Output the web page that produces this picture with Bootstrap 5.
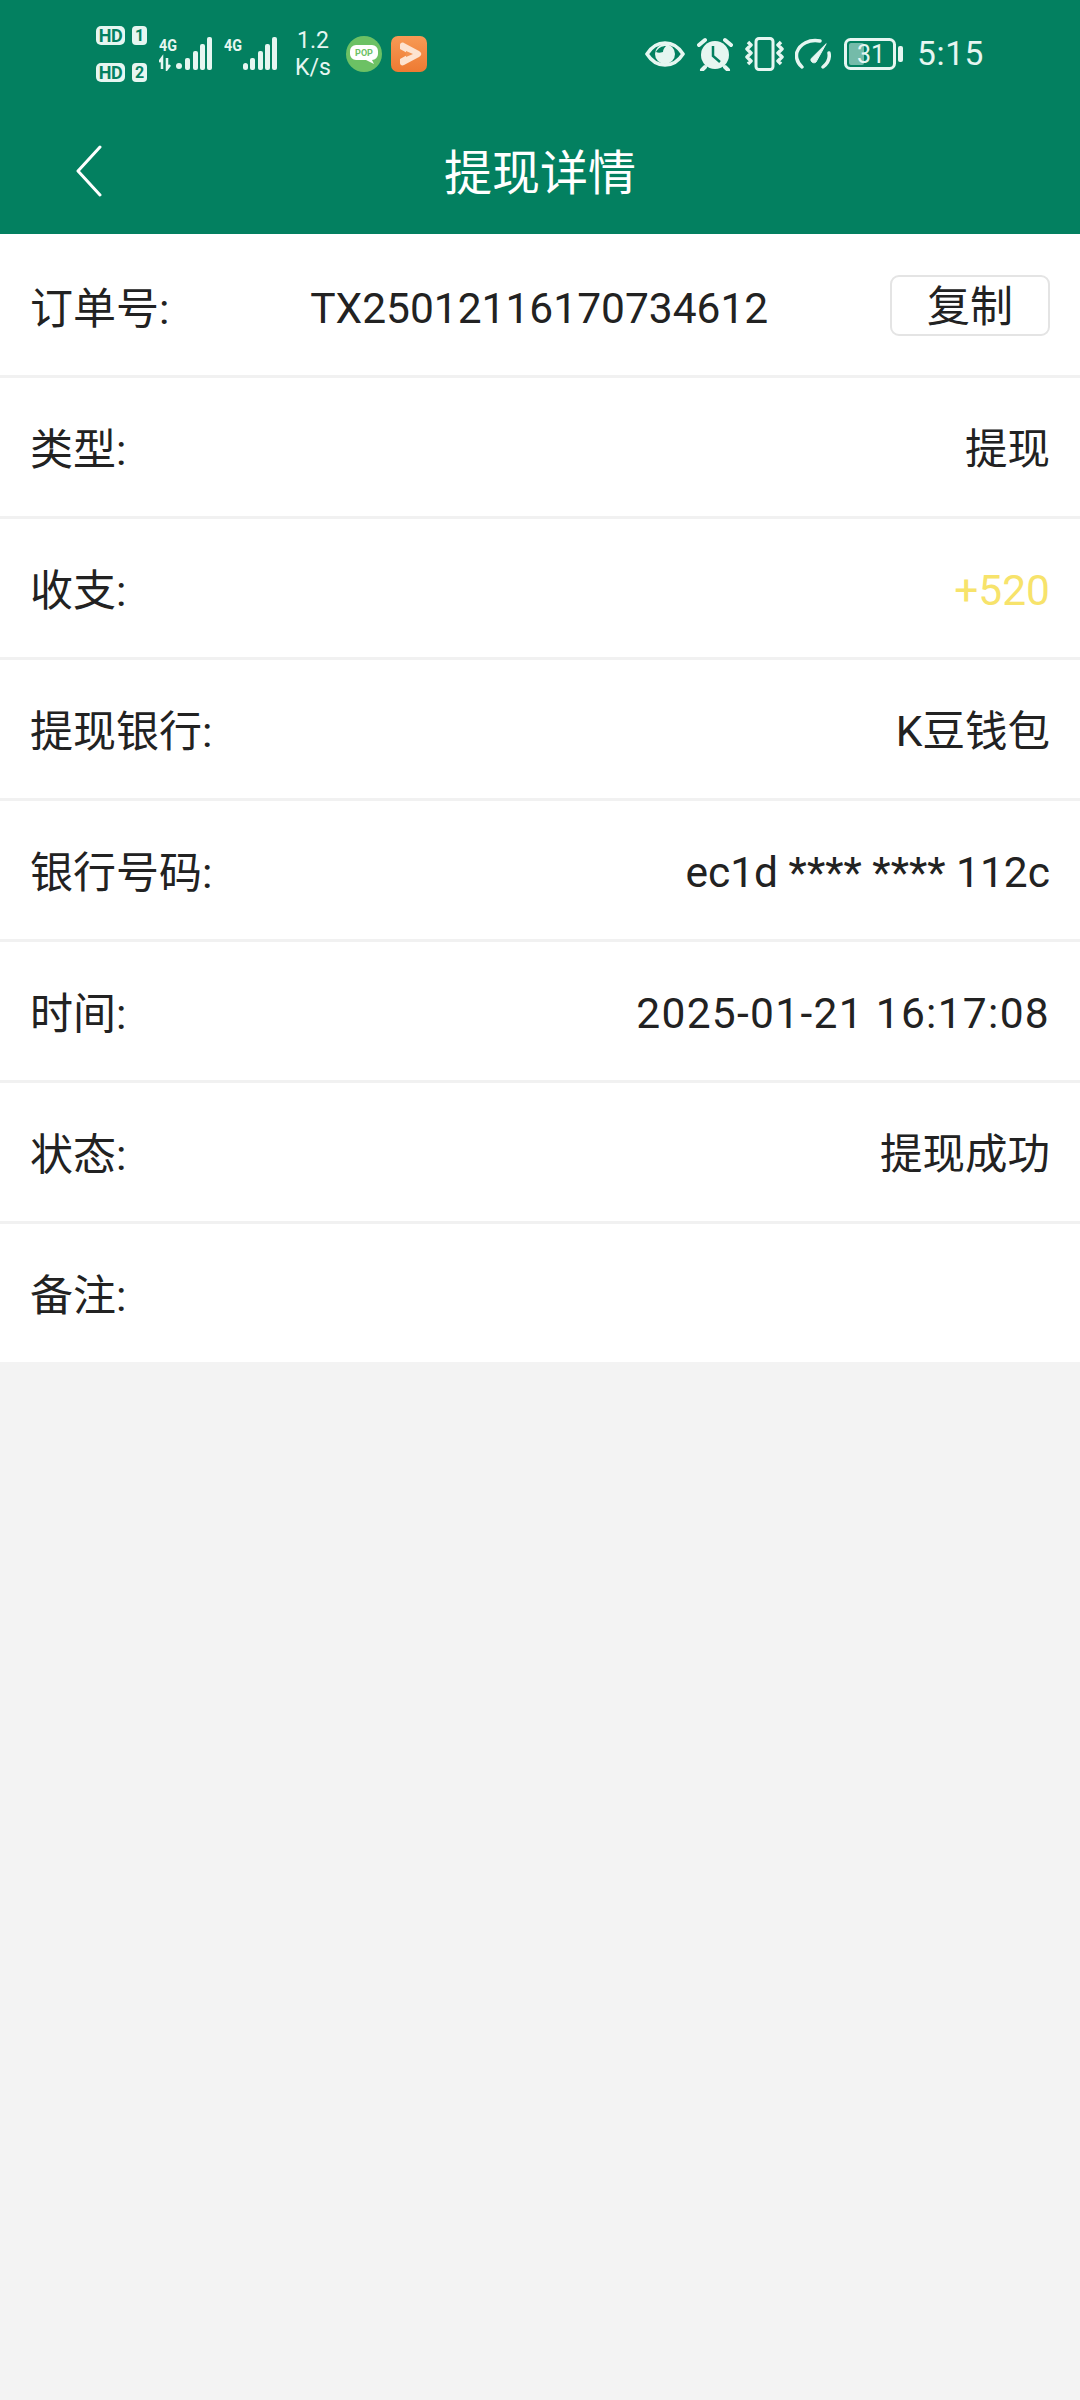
<!DOCTYPE html>
<html lang="zh-CN">
<head>
    <meta charset="UTF-8">
    <meta name="viewport" content="width=device-width, initial-scale=1">
    <title>提现详情</title>
    <link href="https://cdn.jsdelivr.net/npm/bootstrap@5.3.0/dist/css/bootstrap.min.css" rel="stylesheet">
    <style>
        body {
            background: #f3f3f3;
            font-family: "Noto Sans CJK SC", "Roboto", sans-serif;
            color: #222;
            min-height: 2400px;
        }
        .app-head { background: #038060; height: 234px; color: #fff; }
        .status-line { height: 108px; color: #e6f6f1; }
        .left-part { padding-left: 96px; }
        .right-part { padding-right: 96px; }
        .hd-col { display: flex; flex-direction: column; gap: 18px; margin-right: 12px; }
        .hd-item { display: flex; gap: 7px; }
        .hd-tag { width: 29px; height: 19px; background: #e6f6f1; color: #038060; border-radius: 5px; font: 700 18px/19px "Roboto", sans-serif; text-align: center; letter-spacing: -.5px; }
        .hd-num { width: 15px; height: 19px; background: #e6f6f1; color: #038060; border-radius: 4px; font: 700 16px/19px "Roboto", sans-serif; text-align: center; }
        .sig-two { margin-left: 12px; }
        .speed-box { font: 400 23px/27px "Roboto", sans-serif; text-align: center; width: 40px; margin: 0 13px 0 16px; }
        .orange-app { margin-left: 9px; }
        .ic-alarm { margin-left: 12px; }
        .ic-vib { margin-left: 11px; }
        .ic-gauge { margin-left: 10px; }
        .ic-batt { margin-left: 13px; }
        .clock-text { font: 400 33.5px/40px "Roboto", sans-serif; margin-left: 13px; letter-spacing: .6px; }
        .title-line { height: 126px; position: relative; }
        .page-title { font-size: 48px; line-height: 1; padding-bottom: 4px; }
        .back-btn { position: absolute; left: 72px; top: 37px; }
        .info-row { height: 141px; background: #fff; padding: 0 30px; font: 400 42.5px/1 "Roboto", "Noto Sans CJK SC", sans-serif; border-bottom: 3px solid #f1f1f1; }
        .info-row:first-child { height: 144px; }
        .info-row:last-child { height: 138px; border-bottom: 0; }
        .info-row > span { padding-top: 6px; }
        .info-row:first-child > span { padding-top: 9px; }
        .info-row .lbl { font-size: 43px; }
        .order-no { flex: 1; text-align: center; padding-left: 19px; }
        .time-val { letter-spacing: 1.3px; }
        .copy-btn { width: 160px; height: 61px; margin-top: 2px; font-size: 43px; line-height: 1; padding: 4px 0 0; border: 2px solid #e4e4e4; border-radius: 9px; color: #222; background: #fff; }
        .money { color: #f7e36b; }
    </style>
</head>
<body>

<div class="app-head">
    <div class="status-line d-flex justify-content-between align-items-center">
        <div class="left-part d-flex align-items-center">
            <div class="hd-col">
                <div class="hd-item"><span class="hd-tag">HD</span><span class="hd-num">1</span></div>
                <div class="hd-item"><span class="hd-tag">HD</span><span class="hd-num">2</span></div>
            </div>
            <svg width="53" height="34" viewBox="0 0 53 34" fill="#e6f6f1">
                <text x="0" y="14" font-family="Roboto" font-weight="700" font-size="16" textLength="18" lengthAdjust="spacingAndGlyphs">4G</text>
                <path d="M3 32v-11l-3 4M8 21v11l3-4" stroke="#e6f6f1" fill="none" stroke-width="2.500"/>
                <circle cx="20" cy="29" r="3"/>
                <rect x="26" y="21" width="5" height="12" rx="2"/><rect x="34" y="14" width="5" height="19" rx="2"/><rect x="41" y="7" width="5" height="26" rx="2"/><rect x="48" y="0" width="5" height="33" rx="2"/>
            </svg>
            <svg class="sig-two" width="53" height="34" viewBox="0 0 53 34" fill="#e6f6f1">
                <text x="0" y="14" font-family="Roboto" font-weight="700" font-size="16" textLength="18" lengthAdjust="spacingAndGlyphs">4G</text>
                <rect x="19" y="26" width="5" height="7" rx="2.500"/><rect x="26" y="21" width="5" height="12" rx="2"/><rect x="34" y="14" width="5" height="19" rx="2"/><rect x="41" y="7" width="5" height="26" rx="2"/><rect x="48" y="0" width="5" height="33" rx="2"/>
            </svg>
            <div class="speed-box">1.2<br>K/s</div>
            <svg width="36" height="36" viewBox="0 0 36 36">
                <circle cx="18" cy="18" r="18" fill="#6cc164"/>
                <path d="M10 9h16a6 6 0 0 1 6 6v3a6 6 0 0 1-6 6l2 4-8-4H10a6 6 0 0 1-6-6v-3a6 6 0 0 1 6-6z" fill="#fff"/>
                <text x="18" y="20" font-family="Roboto" font-weight="700" font-size="9" fill="#6cc164" text-anchor="middle">POP</text>
            </svg>
            <svg class="orange-app" width="36" height="36" viewBox="0 0 36 36">
                <defs><linearGradient id="orangeFill" x1="0" y1="0" x2="0" y2="1"><stop offset="0" stop-color="#f79a55"/><stop offset="1" stop-color="#ee7a32"/></linearGradient></defs>
                <rect width="36" height="36" rx="7" fill="url(#orangeFill)"/>
                <path d="M9 9c0-2 2-3 4-2l15 8c3 2 3 4 0 6l-15 8c-2 1-4 0-4-2v-4l9-5-9-5z" fill="#fde3d0"/>
                <path d="M15 15l7 3-7 3z" fill="#f3924f"/>
            </svg>
        </div>
        <div class="right-part d-flex align-items-center">
            <svg width="40" height="26" viewBox="0 0 40 26">
                <path d="M2 13C7 5 13 2 20 2s13 3 18 11c-5 8-11 11-18 11S7 21 2 13z" fill="none" stroke="#e6f6f1" stroke-width="3.500"/>
                <circle cx="20" cy="13" r="10" fill="#e6f6f1"/><path d="M11 11c2-4 6-6 10-6-2 2-3 4-3 6-3 1-5 1-7 0z" fill="#038060"/>
            </svg>
            <svg class="ic-alarm" width="36" height="34" viewBox="0 0 36 34">
                <circle cx="18" cy="18" r="14" fill="#e6f6f1"/>
                <path d="M16 9v10l7 6" fill="none" stroke="#038060" stroke-width="2.500"/>
                <path d="M2 8l6-5M34 8l-6-5M8 30l-3 3M28 30l3 3" stroke="#e6f6f1" stroke-width="4" stroke-linecap="round"/>
            </svg>
            <svg class="ic-vib" width="41" height="34" viewBox="0 0 41 34" fill="none" stroke="#e6f6f1" stroke-width="3">
                <rect x="12" y="1.500" width="17" height="31" rx="3"/>
                <path d="M4 5l3 3-4 4 4 4-4 4 4 4-3 3M37 5l-3 3 4 4-4 4 4 4-4 4 3 3" stroke-linejoin="round" stroke-width="3.500"/>
            </svg>
            <svg class="ic-gauge" width="36" height="34" viewBox="0 0 36 34" fill="none" stroke="#e6f6f1" stroke-width="3.500" stroke-linecap="round">
                <path d="M7 30C1 25 1 18 2 15 5 7 14 2 25 4M34 16c1 5-1 10-6 14"/>
                <path d="M31 7L21 25c-2 2-6 0-5-3z" fill="#e6f6f1" stroke-width="1"/>
            </svg>
            <svg class="ic-batt" width="60" height="32" viewBox="0 0 60 32">
                <rect x="1.500" y="1.500" width="49" height="29" rx="5" fill="none" stroke="#e6f6f1" stroke-width="3"/>
                <rect x="5" y="5" width="15" height="22" rx="2" fill="#e6f6f1" opacity=".5"/>
                <rect x="54" y="8" width="5" height="16" rx="2" fill="#e6f6f1"/>
                <text x="27" y="25" font-family="Roboto" font-size="25" fill="#e6f6f1" text-anchor="middle">31</text>
            </svg>
            <span class="clock-text">5:15</span>
        </div>
    </div>
    <div class="title-line d-flex justify-content-center align-items-center">
        <svg class="back-btn" width="34" height="52" viewBox="0 0 34 52" fill="none" stroke="#fff" stroke-width="3" stroke-linecap="round" stroke-linejoin="round">
            <path d="M28 2L6 26l22 24"/>
        </svg>
        <div class="page-title">提现详情</div>
    </div>
</div>

<div class="detail-list">
    <div class="info-row d-flex align-items-center">
        <span class="lbl">订单号:</span>
        <span class="order-no">TX25012116170734612</span>
        <button class="btn copy-btn" type="button">复制</button>
    </div>
    <div class="info-row d-flex align-items-center justify-content-between"><span class="lbl">类型:</span><span>提现</span></div>
    <div class="info-row d-flex align-items-center justify-content-between"><span class="lbl">收支:</span><span class="money">+520</span></div>
    <div class="info-row d-flex align-items-center justify-content-between"><span class="lbl">提现银行:</span><span>K豆钱包</span></div>
    <div class="info-row d-flex align-items-center justify-content-between"><span class="lbl">银行号码:</span><span>ec1d **** **** 112c</span></div>
    <div class="info-row d-flex align-items-center justify-content-between"><span class="lbl">时间:</span><span class="time-val">2025-01-21 16:17:08</span></div>
    <div class="info-row d-flex align-items-center justify-content-between"><span class="lbl">状态:</span><span>提现成功</span></div>
    <div class="info-row d-flex align-items-center justify-content-between"><span class="lbl">备注:</span><span></span></div>
</div>

<script src="https://cdn.jsdelivr.net/npm/bootstrap@5.3.0/dist/js/bootstrap.bundle.min.js"></script>
</body>
</html>
